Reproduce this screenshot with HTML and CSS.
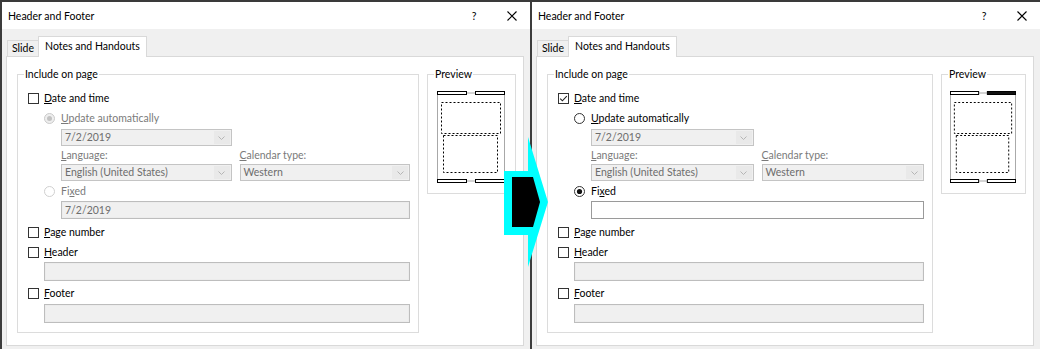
FILE: index.html
```html
<!DOCTYPE html>
<html>
<head>
<meta charset="utf-8">
<link rel="stylesheet" href="styles.css">
</head>
<body>
<div class="screen">
  <div class="dialog dlg-left">
    <div class="titlebar">
      <span class="title">Header and Footer</span>
      <span class="help">?</span>
      <span class="close"><svg width="10" height="10" viewBox="0 0 10 10"><path d="M0.5 0.5 L9.5 9.5 M9.5 0.5 L0.5 9.5" stroke="#000" stroke-width="1.1" fill="none"/></svg></span>
    </div>
    <div class="body">
      <div class="tabs">
        <div class="tab">Slide</div>
        <div class="tab active">Notes and Handouts</div>
      </div>
      <div class="panel">
        <div class="group include">
          <span class="legend">Include on page</span>
          <div class="row">
            <svg class="cb" width="11" height="11" viewBox="0 0 11 11"><rect x="0.5" y="0.5" width="10" height="10" fill="#fff" stroke="#333"/></svg>
            <span><u>D</u>ate and time</span>
          </div>
          <div class="row sub r-update dis">
            <svg class="rb" width="11" height="11" viewBox="0 0 11 11"><circle cx="5.5" cy="5.5" r="5" fill="#eee" stroke="#c9c9c9"/><circle cx="5.5" cy="5.5" r="2.5" fill="#c2c2c2"/></svg>
            <span><u>U</u>pdate automatically</span>
          </div>
          <div class="ddgrid">
            <div class="dd d-date"><span class="val">7/2/2019</span><span class="btn"><svg width="7" height="4" viewBox="0 0 7 4"><path d="M0.5 0.5 L3.5 3.5 L6.5 0.5" stroke="#b5b5b5" fill="none"/></svg></span></div>
            <div></div>
            <div class="lbl"><u>L</u>anguage:</div>
            <div class="lbl"><u>C</u>alendar type:</div>
            <div class="dd d-lang"><span class="val">English (United States)</span><span class="btn"><svg width="7" height="4" viewBox="0 0 7 4"><path d="M0.5 0.5 L3.5 3.5 L6.5 0.5" stroke="#b5b5b5" fill="none"/></svg></span></div>
            <div class="dd d-lang"><span class="val">Western</span><span class="btn"><svg width="7" height="4" viewBox="0 0 7 4"><path d="M0.5 0.5 L3.5 3.5 L6.5 0.5" stroke="#b5b5b5" fill="none"/></svg></span></div>
          </div>
          <div class="row sub r-fixed dis">
            <svg class="rb" width="11" height="11" viewBox="0 0 11 11"><circle cx="5.5" cy="5.5" r="5" fill="#fff" stroke="#cfcfcf"/></svg>
            <span>Fi<u>x</u>ed</span>
          </div>
          <div class="tb tb-fixed dis-tb"><span class="val">7/2/2019</span></div>
          <div class="row r-page">
            <svg class="cb" width="11" height="11" viewBox="0 0 11 11"><rect x="0.5" y="0.5" width="10" height="10" fill="#fff" stroke="#333"/></svg>
            <span><u>P</u>age number</span>
          </div>
          <div class="row r-header">
            <svg class="cb" width="11" height="11" viewBox="0 0 11 11"><rect x="0.5" y="0.5" width="10" height="10" fill="#fff" stroke="#333"/></svg>
            <span><u>H</u>eader</span>
          </div>
          <div class="tb tb-header dis-tb"></div>
          <div class="row r-footer">
            <svg class="cb" width="11" height="11" viewBox="0 0 11 11"><rect x="0.5" y="0.5" width="10" height="10" fill="#fff" stroke="#333"/></svg>
            <span><u>F</u>ooter</span>
          </div>
          <div class="tb tb-footer dis-tb"></div>
        </div>
        <div class="group preview">
          <span class="legend">Preview</span>
          <svg class="page" viewBox="0 0 68 93" preserveAspectRatio="none">
            <rect x="0.5" y="2" width="67" height="88" fill="#fff" stroke="#a8a8a8"/>
            <rect x="0.5" y="0.5" width="29" height="3" fill="#fff" stroke="#000"/>
            <rect x="38.5" y="0.5" width="29" height="3" fill="#fff" stroke="#000"/>
            <rect x="0.5" y="88.5" width="29" height="3" fill="#fff" stroke="#000"/>
            <rect x="38.5" y="88.5" width="29" height="3" fill="#fff" stroke="#000"/>
            <rect x="4.5" y="11.5" width="59" height="31" fill="none" stroke="#000" stroke-dasharray="2 2"/>
            <rect x="6.5" y="44.5" width="54" height="37" fill="none" stroke="#000" stroke-dasharray="2 2"/>
          </svg>
        </div>
      </div>
    </div>
  </div>

  <div class="dialog dlg-right">
    <div class="titlebar">
      <span class="title">Header and Footer</span>
      <span class="help">?</span>
      <span class="close"><svg width="10" height="10" viewBox="0 0 10 10"><path d="M0.5 0.5 L9.5 9.5 M9.5 0.5 L0.5 9.5" stroke="#000" stroke-width="1.1" fill="none"/></svg></span>
    </div>
    <div class="body">
      <div class="tabs">
        <div class="tab">Slide</div>
        <div class="tab active">Notes and Handouts</div>
      </div>
      <div class="panel">
        <div class="group include">
          <span class="legend">Include on page</span>
          <div class="row">
            <svg class="cb" width="11" height="11" viewBox="0 0 11 11"><rect x="0.5" y="0.5" width="10" height="10" fill="#fff" stroke="#333"/><path d="M2.2 5.6 L4.4 7.8 L8.8 3.2" stroke="#222" stroke-width="1.1" fill="none"/></svg>
            <span><u>D</u>ate and time</span>
          </div>
          <div class="row sub r-update">
            <svg class="rb" width="11" height="11" viewBox="0 0 11 11"><circle cx="5.5" cy="5.5" r="5" fill="#fff" stroke="#333"/></svg>
            <span><u>U</u>pdate automatically</span>
          </div>
          <div class="ddgrid">
            <div class="dd d-date"><span class="val">7/2/2019</span><span class="btn"><svg width="7" height="4" viewBox="0 0 7 4"><path d="M0.5 0.5 L3.5 3.5 L6.5 0.5" stroke="#b5b5b5" fill="none"/></svg></span></div>
            <div></div>
            <div class="lbl"><u>L</u>anguage:</div>
            <div class="lbl"><u>C</u>alendar type:</div>
            <div class="dd d-lang"><span class="val">English (United States)</span><span class="btn"><svg width="7" height="4" viewBox="0 0 7 4"><path d="M0.5 0.5 L3.5 3.5 L6.5 0.5" stroke="#b5b5b5" fill="none"/></svg></span></div>
            <div class="dd d-lang"><span class="val">Western</span><span class="btn"><svg width="7" height="4" viewBox="0 0 7 4"><path d="M0.5 0.5 L3.5 3.5 L6.5 0.5" stroke="#b5b5b5" fill="none"/></svg></span></div>
          </div>
          <div class="row sub r-fixed">
            <svg class="rb" width="11" height="11" viewBox="0 0 11 11"><circle cx="5.5" cy="5.5" r="5" fill="#fff" stroke="#333"/><circle cx="5.5" cy="5.5" r="2.6" fill="#111"/></svg>
            <span>Fi<u>x</u>ed</span>
          </div>
          <div class="tb tb-fixed en-tb"></div>
          <div class="row r-page">
            <svg class="cb" width="11" height="11" viewBox="0 0 11 11"><rect x="0.5" y="0.5" width="10" height="10" fill="#fff" stroke="#333"/></svg>
            <span><u>P</u>age number</span>
          </div>
          <div class="row r-header">
            <svg class="cb" width="11" height="11" viewBox="0 0 11 11"><rect x="0.5" y="0.5" width="10" height="10" fill="#fff" stroke="#333"/></svg>
            <span><u>H</u>eader</span>
          </div>
          <div class="tb tb-header dis-tb"></div>
          <div class="row r-footer">
            <svg class="cb" width="11" height="11" viewBox="0 0 11 11"><rect x="0.5" y="0.5" width="10" height="10" fill="#fff" stroke="#333"/></svg>
            <span><u>F</u>ooter</span>
          </div>
          <div class="tb tb-footer dis-tb"></div>
        </div>
        <div class="group preview">
          <span class="legend">Preview</span>
          <svg class="page" viewBox="0 0 68 93" preserveAspectRatio="none">
            <rect x="0.5" y="2" width="67" height="88" fill="#fff" stroke="#a8a8a8"/>
            <rect x="0.5" y="0.5" width="29" height="3" fill="#fff" stroke="#000"/>
            <rect x="38.5" y="0.5" width="29" height="3" fill="#111" stroke="#000"/>
            <rect x="0.5" y="88.5" width="29" height="3" fill="#fff" stroke="#000"/>
            <rect x="38.5" y="88.5" width="29" height="3" fill="#fff" stroke="#000"/>
            <rect x="4.5" y="11.5" width="59" height="31" fill="none" stroke="#000" stroke-dasharray="2 2"/>
            <rect x="6.5" y="44.5" width="54" height="37" fill="none" stroke="#000" stroke-dasharray="2 2"/>
          </svg>
        </div>
      </div>
    </div>
  </div>

  <svg class="arrow" width="52" height="136" viewBox="0 0 52 136">
    <polygon points="4,37 28,37 28,3 48,68 28,133 28,101 4,101" fill="#00ffff"/>
    <polygon points="12,43 33,43 40,68 33,93 12,93" fill="#000"/>
  </svg>
</div>
</body>
</html>
```

FILE: styles.css
```css
* { box-sizing: border-box; }
html, body { margin: 0; padding: 0; }
body {
  width: 1040px;
  height: 349px;
  overflow: hidden;
  background: #f0f0f0;
  font-family: Lato, "Noto Sans", sans-serif;
  font-size: 10.5px;
  color: #000;
}
.screen {
  position: relative;
  display: flex;
  height: 349px;
  border-top: 2px solid #3a3a3a;
}
.dialog {
  display: flex;
  flex-direction: column;
  height: 347px;
  border-left: 2px solid #3c3c3c;
  background: #f0f0f0;
}
.dlg-left { width: 530px; }
.dlg-right { width: 510px; }

.titlebar {
  height: 27px;
  flex: none;
  background: #fff;
  display: flex;
  align-items: center;
  padding-left: 6px;
  line-height: 14px;
}
.title { flex: 1; }
.help { width: 20px; text-align: center; }
.close { width: 37px; margin-left: 9px; display: flex; justify-content: center; align-items: center; }

.body {
  flex: 1;
  display: flex;
  flex-direction: column;
  padding: 0 6px 0 4px;
}
.tabs {
  height: 27px;
  flex: none;
  display: flex;
  align-items: flex-end;
  padding-left: 1px;
}
.tab {
  height: 16px;
  border: 1px solid #d9d9d9;
  border-bottom: none;
  background: #f0f0f0;
  padding: 0 4px;
  line-height: 15px;
}
.tab.active {
  position: relative;
  z-index: 1;
  height: 21px;
  margin-bottom: -1px;
  margin-left: -1px;
  background: #fff;
  padding: 0 6px;
  line-height: 19px;
}
.panel {
  height: 290px;
  flex: none;
  border: 1px solid #d9d9d9;
  background: #fff;
  display: flex;
  align-items: flex-start;
  gap: 8px;
  padding: 17px 7px 0 10px;
}
.group {
  position: relative;
  border: 1px solid #dcdcdc;
}
.legend {
  position: absolute;
  top: -8px;
  left: 6px;
  padding: 0 1px;
  background: #fff;
  line-height: 14px;
}
.include {
  flex: 1;
  height: 259px;
  padding: 16px 8px 0 10px;
  display: flex;
  flex-direction: column;
}
.preview {
  flex: none;
  height: 120px;
  padding: 16px 0 0 9px;
}
.dlg-left .preview { width: 89px; }
.dlg-right .preview { width: 85px; padding-left: 8px; }
.page { display: block; width: 68px; height: 93px; }
.dlg-right .page { width: 66px; }

.row {
  height: 14px;
  display: flex;
  align-items: center;
  line-height: 14px;
  white-space: nowrap;
}
.cb { flex: none; margin-right: 5px; }
.rb { flex: none; margin-right: 6px; }
.sub { padding-left: 16px; }
.dis { color: #7a7a7a; }
.r-update { margin-top: 6px; }
.ddgrid {
  margin-left: 33px;
  display: grid;
  grid-template-columns: 1fr 1fr;
  column-gap: 8px;
}
.d-date { margin-top: 4px; }
.lbl {
  margin-top: 2px;
  height: 14px;
  line-height: 14px;
  color: #7a7a7a;
  white-space: nowrap;
}
.d-lang { margin-top: 2px; }
.dd {
  height: 17px;
  display: flex;
  border: 1px solid #c4c4c4;
  background: #f0f0f0;
  color: #6d6d6d;
}
.val {
  flex: 1;
  padding-left: 3px;
  line-height: 15px;
  white-space: nowrap;
  overflow: hidden;
}
.btn {
  width: 16px;
  margin: 1px;
  display: flex;
  align-items: center;
  justify-content: center;
  background: #e9e9e9;
}
.r-fixed { margin-top: 3px; }
.tb {
  height: 19px;
  display: flex;
  border: 1px solid #bdbdbd;
}
.tb .val { line-height: 16px; }
.dis-tb { background: #f0f0f0; color: #6d6d6d; box-shadow: inset 0 0 0 1px #ececec; }
.en-tb { background: #fff; border-color: #9a9a9a; }
.tb-fixed { margin-left: 33px; margin-top: 3px; height: 18px; }
.r-page { margin-top: 6px; }
.r-header { margin-top: 6px; }
.tb-header { margin-left: 16px; margin-top: 3px; }
.r-footer { margin-top: 5px; }
.tb-footer { margin-left: 16px; margin-top: 4px; }

.arrow {
  position: absolute;
  left: 500px;
  top: 132px;
}
```
